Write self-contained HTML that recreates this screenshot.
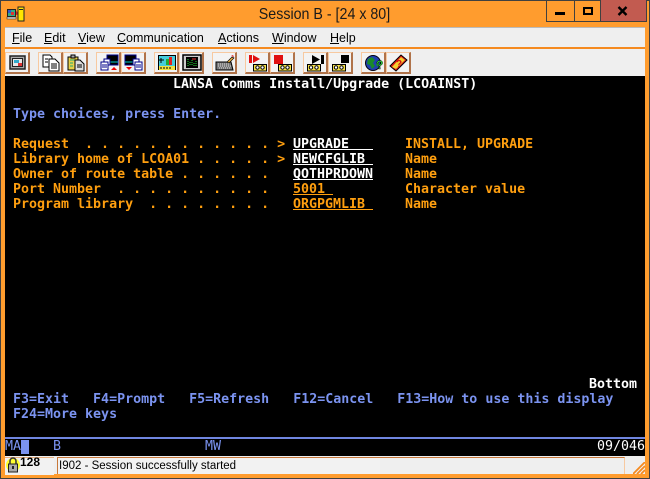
<!DOCTYPE html>
<html><head><meta charset="utf-8">
<style>
html,body{margin:0;padding:0;background:#ff9c2e}
#w{position:relative;width:650px;height:479px;overflow:hidden;background:#ff9c2e;font-family:"Liberation Sans",sans-serif}
.a{position:absolute}
#title{left:0;width:649px;top:6px;text-align:center;font:16px "Liberation Sans",sans-serif;color:#1a1a1a;transform:scaleX(.89)}
#menu{left:5px;top:27px;width:640px;height:21px;background:#efefef;border-top:1px solid #bbb;box-sizing:border-box}
.m{position:absolute;top:31px;font:12.5px "Liberation Sans",sans-serif;color:#000}
.m u{text-decoration:underline}
#ol{left:5px;top:47px;width:640px;height:2px;background:#f58a1f}
#tb{left:5px;top:49px;width:640px;height:27px;background:#efefef}
.b{position:absolute;top:52px;width:25px;height:22px;box-sizing:border-box;background:#f3f3f3;border:1px solid #f7c9a0;border-right:2px solid #b0734a;border-bottom:2px solid #b0734a}
.b svg{position:absolute;left:2px;top:1px}
#t{left:5px;top:76px;width:640px;height:380px;background:#000}
.r{position:absolute;white-space:pre;font:bold 13.3px/15px "DejaVu Sans Mono","Liberation Mono",monospace;letter-spacing:0;color:#ff9f0f}
.w{color:#fff}.bl{color:#7b93f0}
.ul{position:absolute;height:1px;background:#fff}
.s{position:absolute;font:13.3px/15px "DejaVu Sans Mono",monospace}
#st{left:5px;top:456px;width:640px;height:18px;background:#efefef}
</style></head><body><div id="w">
<div class="a" style="left:0;top:0;width:650px;height:1px;background:#404040"></div>
<div class="a" style="left:0;top:0;width:1px;height:479px;background:#404040"></div>
<div class="a" style="right:0;top:0;width:1px;height:479px;background:#404040"></div>
<div class="a" style="left:0;top:478px;width:650px;height:1px;background:#404040"></div>

<svg class="a" style="left:6px;top:6px" width="20" height="16" viewBox="0 0 20 16">
<rect x="1" y="3" width="9" height="8" fill="#222"/><rect x="2" y="4" width="7" height="6" fill="#3a8"/><rect x="2" y="4" width="3" height="3" fill="#35c"/><rect x="5" y="6" width="3" height="3" fill="#d33"/><rect x="1" y="11" width="9" height="2" fill="#ddd" stroke="#222" stroke-width=".5"/>
<path d="M10 5l4 3-4 1z" fill="#c22"/>
<rect x="12" y="1" width="6" height="14" fill="#ffe600" stroke="#222"/><rect x="13" y="3" width="4" height="1" fill="#222"/>
</svg>
<div class="a" id="title">Session B - [24 x 80]</div>

<div class="a" style="left:546px;top:0;width:71px;height:22px;border:1px solid #404040;border-top:0;box-sizing:border-box"></div>
<div class="a" style="left:574px;top:0;width:1px;height:22px;background:#404040"></div>
<div class="a" style="left:600px;top:0;width:47px;height:22px;background:#c25b50;border:1px solid #404040;border-top:0;box-sizing:border-box"></div>
<div class="a" style="left:555px;top:12px;width:10px;height:3px;background:#000"></div>
<div class="a" style="left:583px;top:7px;width:10px;height:8px;border:2px solid #000;box-sizing:border-box"></div>
<svg class="a" style="left:617px;top:6px" width="12" height="10" viewBox="0 0 12 10"><path d="M1.5 1l8 8M9.5 1l-8 8" stroke="#000" stroke-width="2.4"/></svg>

<div class="a" id="menu"></div>
<div class="m" style="left:12px"><u>F</u>ile</div>
<div class="m" style="left:44px"><u>E</u>dit</div>
<div class="m" style="left:78px"><u>V</u>iew</div>
<div class="m" style="left:117px"><u>C</u>ommunication</div>
<div class="m" style="left:218px"><u>A</u>ctions</div>
<div class="m" style="left:272px"><u>W</u>indow</div>
<div class="m" style="left:330px"><u>H</u>elp</div>
<div class="a" id="ol"></div>
<div class="a" id="tb"></div>

<div class="b" style="left:5px"><svg width="20" height="18"><rect x="2" y="2" width="15" height="13" fill="#aaa" stroke="#222" stroke-width="1.5"/><rect x="4.500" y="4.500" width="10" height="8" fill="#e8e8e8" stroke="#222"/><rect x="6" y="6" width="5" height="3" fill="#3ac"/><rect x="10" y="9" width="4" height="3" fill="#d33"/></svg></div>
<div class="b" style="left:38px"><svg width="20" height="18"><path d="M2 1h7l2 2v10H2z" fill="#fff" stroke="#000"/><path d="M8 5h6l4 4v8H8z" fill="#fff" stroke="#000"/><path d="M4 5h3M4 8h3M10 10h6M10 12h6M10 14h6" stroke="#000"/></svg></div>
<div class="b" style="left:63px"><svg width="20" height="18"><rect x="2" y="3" width="10" height="13" fill="#e8d04a" stroke="#000"/><rect x="5" y="1" width="4" height="3" fill="#aaa" stroke="#000"/><path d="M4 6h5M4 9h3M4 12h3" stroke="#2a7"/><path d="M9 6h5l4 4v7H9z" fill="#ddd" stroke="#000"/><path d="M11 11h5M11 13h5" stroke="#000"/></svg></div>
<div class="b" style="left:96px"><svg width="20" height="18"><rect x="8" y="1" width="11" height="10" fill="#000" stroke="#008"/><path d="M9 8h10" stroke="#0cc"/><rect x="5" y="5" width="6" height="6" fill="#fff" stroke="#008"/><rect x="2" y="8" width="7" height="8" fill="#fff" stroke="#008"/><path d="M3 11h5M3 13h5" stroke="#008"/><path d="M12 16h6l-3-3z" fill="#e00"/></svg></div>
<div class="b" style="left:121px"><svg width="20" height="18"><rect x="1" y="1" width="11" height="10" fill="#000" stroke="#008"/><path d="M1 8h11" stroke="#0cc"/><rect x="9" y="5" width="6" height="6" fill="#fff" stroke="#008"/><rect x="11" y="8" width="7" height="8" fill="#fff" stroke="#008"/><path d="M12 11h5M12 13h5" stroke="#008"/><path d="M2 13h6l-3 3z" fill="#e00"/></svg></div>
<div class="b" style="left:154px"><svg width="20" height="18"><rect x="1" y="1" width="18" height="15" fill="#000"/><rect x="2" y="2" width="16" height="10" fill="#4cd"/><path d="M4 4v5M2 6h5" stroke="#000"/><rect x="9" y="5" width="3" height="6" fill="#2a3"/><rect x="12" y="3" width="3" height="8" fill="#d22"/><rect x="2" y="12" width="16" height="4" fill="#f0e040"/><path d="M4 13v2M7 13v2M10 13v2M13 13v2" stroke="#000"/></svg></div>
<div class="b" style="left:179px"><svg width="20" height="18"><rect x="1" y="1" width="18" height="15" fill="#ccc" stroke="#000" stroke-width="1.500"/><rect x="4" y="3" width="12" height="11" fill="#000"/><path d="M6 5v7M8 8v4M10 6v6M12 9v3M14 7v5" stroke="#2d3" stroke-dasharray="1 1"/><path d="M10 5h4" stroke="#e33"/></svg></div>
<div class="b" style="left:212px"><svg width="20" height="18"><path d="M1 8h15l2 8H1z" fill="#777" stroke="#000"/><path d="M3 10h12M3 12h13M4 14h12" stroke="#ddd" stroke-dasharray="1 1"/><path d="M12 8l5-5 2 1-5 5z" fill="#e8b040" stroke="#000" stroke-width=".7"/><path d="M16 2l2-1 1 2z" fill="#d22"/></svg></div>
<div class="b" style="left:245px"><svg width="20" height="18"><path d="M1 1h3v8H1zM5 1l7 4-7 4z" fill="#e01010"/><rect x="5.500" y="10.500" width="13" height="6.500" fill="#f6e24a" stroke="#000"/><circle cx="9.500" cy="13.500" r="1.700" fill="#fff" stroke="#000"/><circle cx="14.500" cy="13.500" r="1.700" fill="#fff" stroke="#000"/></svg></div>
<div class="b" style="left:270px"><svg width="20" height="18"><rect x="1" y="1" width="9" height="9" fill="#e01010"/><rect x="5.500" y="10.500" width="13" height="6.500" fill="#f6e24a" stroke="#000"/><circle cx="9.500" cy="13.500" r="1.700" fill="#fff" stroke="#000"/><circle cx="14.500" cy="13.500" r="1.700" fill="#fff" stroke="#000"/></svg></div>
<div class="b" style="left:303px"><svg width="20" height="18"><path d="M6 1l8 4.500-8 4.500z" fill="#000"/><rect x="15" y="1" width="3" height="9" fill="#000"/><rect x="1.500" y="10.500" width="13" height="6.500" fill="#f6e24a" stroke="#000"/><circle cx="5" cy="13.500" r="1.700" fill="#fff" stroke="#000"/><circle cx="10.500" cy="13.500" r="1.700" fill="#fff" stroke="#000"/></svg></div>
<div class="b" style="left:328px"><svg width="20" height="18"><rect x="10" y="1" width="8" height="8" fill="#000"/><rect x="1.500" y="10.500" width="13" height="6.500" fill="#f6e24a" stroke="#000"/><circle cx="5" cy="13.500" r="1.700" fill="#fff" stroke="#000"/><circle cx="10.500" cy="13.500" r="1.700" fill="#fff" stroke="#000"/></svg></div>
<div class="b" style="left:361px"><svg width="20" height="18"><circle cx="9" cy="9" r="7.500" fill="#1f3fb0" stroke="#001"/><path d="M4 5l4-2 3 3-2 3 2 3-3 3-2-4-3-1z" fill="#1a8a2a"/><path d="M12 9l3-1 0 3-2 2z" fill="#1a8a2a"/><text x="12" y="15" font-family="Liberation Sans" font-weight="bold" font-size="12" fill="#2fd13f" stroke="#000" stroke-width=".4">?</text></svg></div>
<div class="b" style="left:386px"><svg width="20" height="18"><path d="M1 12L12 1l6 5L7 17z" fill="#e01818" stroke="#000"/><path d="M3 13l9-10 4 3-9 9z" fill="#f4cf30"/><text x="7" y="13" font-family="Liberation Sans" font-weight="bold" font-size="10" fill="#d01010">?</text></svg></div>

<div class="a" id="t"></div>
<div class="r w" style="left:173px;top:77px">LANSA Comms Install/Upgrade (LCOAINST)</div>
<div class="r bl" style="left:13px;top:107px">Type choices, press Enter.</div>
<div class="r" style="left:13px;top:137px">Request  . . . . . . . . . . . . &gt;</div>
<div class="r" style="left:13px;top:152px">Library home of LCOA01 . . . . . &gt;</div>
<div class="r" style="left:13px;top:167px">Owner of route table . . . . . .</div>
<div class="r" style="left:13px;top:182px">Port Number  . . . . . . . . . .</div>
<div class="r" style="left:13px;top:197px">Program library  . . . . . . . .</div>
<div class="r w" style="left:293px;top:137px">UPGRADE</div>
<div class="r w" style="left:293px;top:152px">NEWCFGLIB</div>
<div class="r w" style="left:293px;top:167px">QOTHPRDOWN</div>
<div class="r" style="left:293px;top:182px">5001</div>
<div class="r" style="left:293px;top:197px">ORGPGMLIB</div>
<div class="ul" style="left:293px;top:149px;width:80px"></div>
<div class="ul" style="left:293px;top:164px;width:80px"></div>
<div class="ul" style="left:293px;top:179px;width:80px"></div>
<div class="ul" style="left:293px;top:194px;width:40px;background:#ff9f0f"></div>
<div class="ul" style="left:293px;top:209px;width:80px;background:#ff9f0f"></div>
<div class="r" style="left:405px;top:137px">INSTALL, UPGRADE</div>
<div class="r" style="left:405px;top:152px">Name</div>
<div class="r" style="left:405px;top:167px">Name</div>
<div class="r" style="left:405px;top:182px">Character value</div>
<div class="r" style="left:405px;top:197px">Name</div>
<div class="r w" style="left:589px;top:377px">Bottom</div>
<div class="r bl" style="left:13px;top:392px">F3=Exit   F4=Prompt   F5=Refresh   F12=Cancel   F13=How to use this display</div>
<div class="r bl" style="left:13px;top:407px">F24=More keys</div>

<div class="a" style="left:5px;top:437px;width:640px;height:2px;background:#7086e0"></div>
<div class="s bl" style="left:5px;top:439px">MA</div>
<div class="a" style="left:21px;top:440px;width:8px;height:14px;background:#7b93f0"></div>
<div class="s bl" style="left:53px;top:439px">B</div>
<div class="s bl" style="left:205px;top:439px">MW</div>
<div class="s" style="left:597px;top:439px;color:#fff">09/046</div>

<div class="a" id="st"></div>
<div class="a" style="left:5px;top:457px;width:49px;height:17px;background:#f2f2f2;border-top:1px solid #e8b080"></div>
<div class="a" style="left:57px;top:457px;width:323px;height:17px;box-sizing:border-box;border-top:1px solid #c8783a;border-left:1px solid #c8783a;background:#f2f2f2"></div>
<div class="a" style="left:380px;top:457px;width:245px;height:17px;box-sizing:border-box;border-top:1px solid #c8783a;border-right:1px solid #f7c9a0;background:#efefef"></div>
<svg class="a" style="left:6px;top:456px" width="14" height="18" viewBox="0 0 14 18"><circle cx="7" cy="9" r="7" fill="#ffff30"/><path d="M4 8V5a3 3 0 0 1 6 0v3" fill="none" stroke="#333" stroke-width="1.500"/><rect x="2.500" y="8" width="9" height="8" fill="#aaa" stroke="#222"/><rect x="6" y="10" width="2" height="3" fill="#222"/></svg>
<div class="a" style="left:20px;top:455px;font:bold 12px 'Liberation Sans',sans-serif;color:#000">128</div>
<div class="a" style="left:59px;top:460px;font:11.500px 'Liberation Sans',sans-serif;color:#000">I902 - Session successfully started</div>
<svg class="a" style="left:633px;top:462px" width="12" height="12" viewBox="0 0 12 12"><path d="M0 12L12 0M4 12l8-8M8 12l4-4" stroke="#f58a1f" stroke-width="1.800"/></svg>
</div></body></html>
